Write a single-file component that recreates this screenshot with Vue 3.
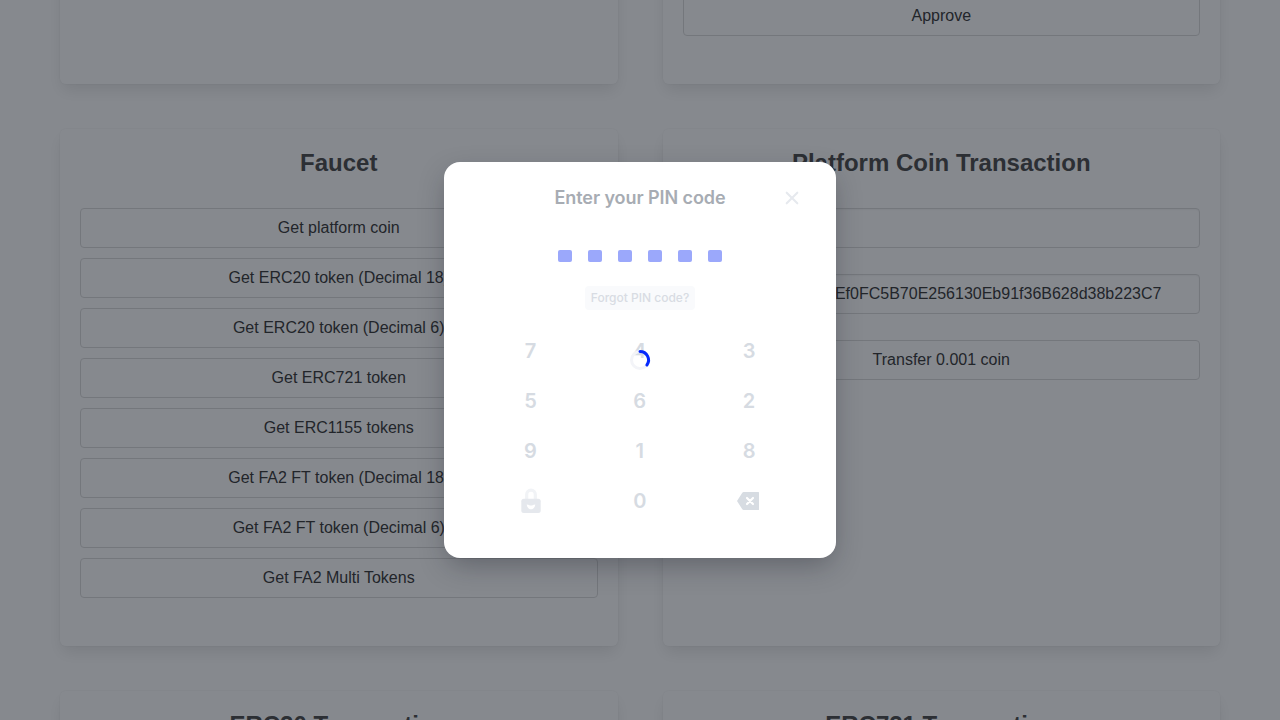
<script setup>
const faucet = [
  'Get platform coin',
  'Get ERC20 token (Decimal 18)',
  'Get ERC20 token (Decimal 6)',
  'Get ERC721 token',
  'Get ERC1155 tokens',
  'Get FA2 FT token (Decimal 18)',
  'Get FA2 FT token (Decimal 6)',
  'Get FA2 Multi Tokens'
]
const keys = ['7', '4', '3', '5', '6', '2', '9', '1', '8']
</script>

<template>
  <div class="screen">
    <main class="page">
      <section class="box top"></section>
      <section class="box top">
        <button class="control">Approve</button>
      </section>
      <section class="box">
        <h2>Faucet</h2>
        <div class="stack">
          <button v-for="label in faucet" :key="label" class="control">{{ label }}</button>
        </div>
      </section>
      <section class="box">
        <h2>Platform Coin Transaction</h2>
        <div class="stack wide">
          <div class="control input"></div>
          <div class="control input address">0xEf0FC5B70E256130Eb91f36B628d38b223C7</div>
          <button class="control">Transfer 0.001 coin</button>
        </div>
      </section>
      <section class="box">
        <h2>ERC20 Transaction</h2>
      </section>
      <section class="box">
        <h2>ERC721 Transaction</h2>
      </section>
    </main>

    <div class="overlay">
      <div class="modal">
        <header class="head">
          <span class="title">Enter your PIN code</span>
          <svg class="close" width="24" height="24" viewBox="0 0 24 24">
            <path d="M6.700 6.700l10.600 10.600M17.300 6.700l-10.600 10.600" fill="none" stroke="#e6e9ee" stroke-width="2.100" stroke-linecap="round" />
          </svg>
        </header>
        <div class="dots"><i v-for="n in 6" :key="n"></i></div>
        <button class="forgot">Forgot PIN code?</button>
        <div class="pad">
          <span v-for="k in keys" :key="k" class="key">{{ k }}</span>
          <span class="key icon">
            <svg width="24" height="26" viewBox="0 0 24 26">
              <path d="M7.700 12V6.500a4.300 4.300 0 0 1 8.600 0V12" fill="none" stroke="#f1f3f6" stroke-width="3.200" />
              <rect x="2.300" y="10.800" width="19.400" height="14.200" rx="2.500" fill="#e5e8ed" />
              <path d="M7.700 16.500q1.800 0 2.200 .6q2.100 1 4.200 0q.4-.6 2.200-.6c-.3 3-2 4.800-4.300 4.800s-4-1.800-4.300-4.800z" fill="#fff" />
            </svg>
          </span>
          <span class="key">0</span>
          <span class="key icon erase">
            <svg width="24" height="24" viewBox="0 0 24 24">
              <path d="M1 12L6.300 3.800Q6.800 3 7.600 3H22.400Q23 3 23 3.600V20.400Q23 21 22.400 21H7.600Q6.800 21 6.300 20.200Z" fill="#d7dce2" />
              <path d="M11 9l6 6M17 9l-6 6" fill="none" stroke="#fff" stroke-width="2.200" stroke-linecap="round" />
            </svg>
          </span>
        </div>
        <svg class="spinner" width="24" height="24" viewBox="0 0 24 24">
          <circle cx="12" cy="12" r="8.500" fill="none" stroke="#f3f4f8" stroke-width="3" />
          <path d="M12 3.500A8.500 8.500 0 0 1 18.900 17" fill="none" stroke="#0529fc" stroke-width="3" stroke-linecap="round" />
        </svg>
      </div>
    </div>
  </div>
</template>

<style>
body {
  margin: 0;
  overflow: hidden;
}
</style>

<style scoped>
* {
  box-sizing: border-box;
}
.screen {
  position: relative;
  width: 1280px;
  height: 720px;
  overflow: hidden;
  background: #fff;
  font: 16px/24px "Liberation Sans", Arial, sans-serif;
  color: #4a4a4a;
}
.page {
  display: grid;
  grid-template-columns: 1fr 1fr;
  grid-template-rows: 84px 517px 517px;
  gap: 45px;
  padding: 0 60px;
}
.box {
  background: #fff;
  border-radius: 6px;
  padding: 20px;
  box-shadow: 0 8px 16px -2px rgba(10, 10, 10, 0.1), 0 0 0 1px rgba(10, 10, 10, 0.02);
}
.box.top {
  display: flex;
  align-items: flex-end;
  height: 184px;
  margin-top: -100px;
  padding-bottom: 48px;
}
h2 {
  margin: 0 0 32px;
  font-size: 24px;
  line-height: 27px;
  font-weight: 700;
  text-align: center;
}
.stack {
  display: flex;
  flex-direction: column;
  gap: 10px;
}
.stack.wide {
  gap: 26px;
}
.control {
  display: flex;
  align-items: center;
  justify-content: center;
  width: 100%;
  height: 40px;
  padding: 0 16px;
  border: 1px solid #dbdbdb;
  border-radius: 4px;
  background: #fff;
  color: #363636;
  font: inherit;
}
.input {
  box-shadow: inset 0 1px 2px rgba(10, 10, 10, 0.05);
}
.address {
  justify-content: flex-end;
  padding-right: 37.600px;
}
.overlay {
  position: absolute;
  inset: 0;
  display: flex;
  align-items: center;
  justify-content: center;
  background: rgba(14, 20, 29, 0.5);
}
.modal {
  position: relative;
  display: flex;
  flex-direction: column;
  align-items: center;
  width: 392px;
  height: 396px;
  padding: 24px 32px;
  border-radius: 16px;
  background: #fff;
  box-shadow: 0 10px 28px -4px rgba(20, 22, 36, 0.34);
  font-family: Inter, sans-serif;
}
.head {
  display: grid;
  grid-template-columns: 24px 1fr 24px;
  width: 100%;
  height: 24px;
}
.title {
  grid-column: 2;
  text-align: center;
  font-size: 18px;
  font-weight: 600;
  letter-spacing: -0.004em;
  color: #a7acb3;
}
.close {
  display: block;
}
.dots {
  display: flex;
  gap: 16px;
  margin-top: 40px;
}
.dots i {
  width: 14px;
  height: 12px;
  border-radius: 2px;
  background: #9ba8fb;
}
.forgot {
  width: 110px;
  height: 24px;
  margin-top: 24px;
  padding: 0;
  border: 0;
  border-radius: 4px;
  background: #f9fafc;
  color: #d8dce3;
  font: 500 12px/24px Inter, sans-serif;
}
.pad {
  display: grid;
  grid-template-columns: repeat(3, 109.300px);
  grid-auto-rows: 50px;
  margin-top: 16px;
}
.key {
  display: flex;
  align-items: center;
  justify-content: center;
  padding-right: 0.500px;
  font-size: 20px;
  font-weight: 600;
  color: #d6dbe2;
}
.icon {
  padding: 0;
}
.erase {
  padding-right: 2px;
}
.spinner {
  position: absolute;
  left: 184px;
  top: 186px;
}
</style>
